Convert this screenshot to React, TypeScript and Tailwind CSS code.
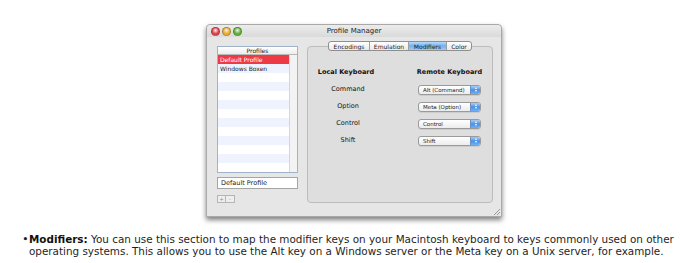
import React from 'react';

const ui = { fontFamily: '"DejaVu Sans", "Liberation Sans", sans-serif' };

function Light({ color }: { color: string }) {
    return (
        <div
            className="w-[9px] h-[9px] rounded-full border border-black/25"
            style={{ background: `radial-gradient(circle at 50% 35%, #fff8 0, ${color} 55%)` }}
        />
    );
}

function Popup({ label }: { label: string }) {
    return (
        <div className="flex h-[10px] w-[63px] rounded-[3px] border border-[#9a9a9a] bg-gradient-to-b from-white to-[#ececec] overflow-hidden shadow-[0_1px_0_rgba(0,0,0,0.08)]">
            <div className="flex-1 pl-[4px] text-[5.5px] leading-[8px] text-[#222] whitespace-nowrap">{label}</div>
            <div className="w-[10px] flex flex-col items-center justify-center gap-[1px] bg-gradient-to-b from-[#a9cdf5] via-[#4b92e6] to-[#6eb0f5] border-l border-[#6a8fc0]">
                <div className="w-0 h-0 border-l-[1.5px] border-r-[1.5px] border-b-[2px] border-l-transparent border-r-transparent border-b-white" />
                <div className="w-0 h-0 border-l-[1.5px] border-r-[1.5px] border-t-[2px] border-l-transparent border-r-transparent border-t-white" />
            </div>
        </div>
    );
}

const rows = [
    ['Command', 'Alt (Command)'],
    ['Option', 'Meta (Option)'],
    ['Control', 'Control'],
    ['Shift', 'Shift'],
];

const tabs = ['Encodings', 'Emulation', 'Modifiers', 'Color'];

export default function App() {
    return (
        <div className="w-[680px] h-[263px] bg-white overflow-hidden">
            <div className="pt-[24px] pl-[206px]">
                {/* Window */}
                <div
                    style={ui}
                    className="relative w-[296px] h-[193px] rounded-t-[4px] bg-[#e6e6e6] border border-[#a9a9a9] shadow-[0_3px_5px_rgba(0,0,0,0.5)] flex flex-col"
                >
                    {/* Title bar */}
                    <div className="relative h-[12px] flex items-center pl-[4px] gap-[2px] rounded-t-[4px] bg-gradient-to-b from-[#ececec] to-[#dadada]">
                        <Light color="#e0454d" />
                        <Light color="#e9ae2c" />
                        <Light color="#62b23d" />
                        <div className="absolute inset-x-0 top-0 h-[12px] flex items-center justify-center text-[7px] text-[#222]">
                            Profile Manager
                        </div>
                    </div>

                    <div className="flex pl-[10px] pt-[9px]">
                        {/* Left column */}
                        <div className="w-[81px] flex flex-col">
                            <div className="h-[127px] border border-[#9fb3cb] bg-white flex flex-col overflow-hidden">
                                <div className="h-[8px] flex items-center justify-center text-[6px] text-[#222] border-b border-[#b9b9b9] bg-gradient-to-b from-white to-[#ededed]">
                                    Profiles
                                </div>
                                <div className="flex flex-1">
                                    <div className="flex-1 flex flex-col">
                                        <div className="h-[9px] bg-[#ee3a44] text-white text-[6px] leading-[9px] pl-[2px]">Default Profile</div>
                                        <div className="h-[9px] bg-[#eef3fd] text-[#222] text-[6px] leading-[9px] pl-[2px]">Windows Boxen</div>
                                        {Array.from({ length: 11 }).map((_, i) => (
                                            <div key={i} className={`h-[9px] ${i % 2 ? 'bg-[#eef3fd]' : 'bg-white'}`} />
                                        ))}
                                    </div>
                                    <div className="w-[8px] border-l border-[#d6d6d6] bg-[#f3f3f3]" />
                                </div>
                            </div>
                            <div className="mt-[4px] h-[12px] border border-[#a5a5a5] bg-white text-[6.5px] leading-[10px] pl-[3px] text-[#222]">
                                Default Profile
                            </div>
                            <div className="mt-[6px] flex">
                                <div className="w-[9px] h-[8px] border border-[#b5b5b5] bg-[#eeeeee] text-[5px] leading-[6px] text-center text-[#888]">+</div>
                                <div className="w-[9px] h-[8px] border border-l-0 border-[#b5b5b5] bg-[#eeeeee] text-[5px] leading-[6px] text-center text-[#888]">-</div>
                            </div>
                        </div>

                        {/* Right group box */}
                        <div className="relative ml-[9px] w-[186px] h-[157px] rounded-[4px] border border-[#bcbcbc] bg-[#dedede] pt-[17px]">
                            <div className="absolute -top-[6px] left-0 right-0 flex justify-center">
                                <div className="flex h-[10px] rounded-[3px] border border-[#8f8f8f] overflow-hidden bg-gradient-to-b from-white to-[#e9e9e9]">
                                    {tabs.map((t, i) => (
                                        <div
                                            key={t}
                                            className={`flex items-center justify-center text-[6px] text-[#222] ${i ? 'border-l border-[#a0a0a0]' : ''} ${t === 'Modifiers' ? 'bg-gradient-to-b from-[#b9dbfa] via-[#6fb1f0] to-[#9ccbf7] w-[38px]' : t === 'Color' ? 'w-[25px]' : t === 'Encodings' ? 'w-[40px]' : 'w-[39px]'}`}
                                        >
                                            {t}
                                        </div>
                                    ))}
                                </div>
                            </div>

                            <div className="flex h-[17px] items-center text-[6.5px] font-bold text-[#111] whitespace-nowrap">
                                <div className="ml-[3px] w-[70px] text-center">Local Keyboard</div>
                                <div className="ml-[37px] w-[63px] flex justify-center">Remote Keyboard</div>
                            </div>
                            {rows.map(([l, r]) => (
                                <div key={l} className="flex h-[17px] items-center">
                                    <div className="ml-[5px] w-[70px] text-center text-[6.5px] text-[#111]">{l}</div>
                                    <div className="ml-[35px]">
                                        <Popup label={r} />
                                    </div>
                                </div>
                            ))}
                        </div>
                    </div>

                    {/* Resize grip */}
                    <div className="absolute right-[1px] bottom-[1px] w-[6px] h-[6px] bg-[linear-gradient(135deg,transparent_45%,#9a9a9a_45%,#9a9a9a_55%,transparent_55%,transparent_70%,#9a9a9a_70%,#9a9a9a_80%,transparent_80%)]" />
                </div>
            </div>

            {/* Description */}
            <div
                className="mt-[16px] pl-[22px] flex text-[10.4px] leading-[12px] text-[#1e1e1e]"
                style={{ fontFamily: '"DejaVu Sans", Verdana, sans-serif' }}
            >
                <div className="w-[7px] text-center text-[9px] font-bold">•</div>
                <div className="whitespace-nowrap">
                    <b className="text-[#111]">Modifiers:</b> You can use this section to map the modifier keys on your Macintosh keyboard to keys commonly used on other
                    <br />
                    operating systems. This allows you to use the Alt key on a Windows server or the Meta key on a Unix server, for example.
                </div>
            </div>
        </div>
    );
}
